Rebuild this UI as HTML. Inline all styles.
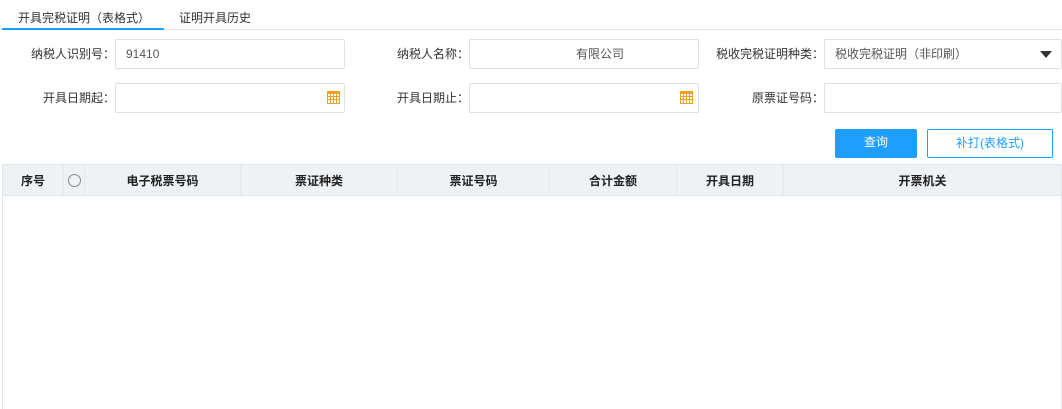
<!DOCTYPE html>
<html><head><meta charset="utf-8"><style>
*{box-sizing:border-box;margin:0;padding:0}
body{width:1062px;height:409px;background:#fff;font-family:"Liberation Sans","Noto Sans CJK SC",sans-serif;font-size:12px;color:#333;position:relative;overflow:hidden}
.a{position:absolute}
.tabs{left:0;top:0;width:1062px;height:30px;border-bottom:1px solid #e4e4e4}
.tab{top:9px;font-size:12px;color:#333}
.ul{left:2px;top:28px;width:162px;height:2px;background:#1e9fff}
.lbl{text-align:right;font-size:12px;color:#333;line-height:30px;height:30px}
.in{height:30px;border:1px solid #e0e0e0;border-radius:2px;line-height:28px;padding-left:10px;font-size:12px;color:#555}
.cal{width:13px;height:13px;border:1.5px solid #f0a020;border-top-width:3px;background:repeating-linear-gradient(90deg,transparent 0 2px,#f0a020 2px 3px),#fff;background:
linear-gradient(90deg,transparent 2px,#f0a020 2px 3px,transparent 3px 5px,#f0a020 5px 6px,transparent 6px 8px,#f0a020 8px 9px,transparent 9px),
linear-gradient(180deg,transparent 2px,#f0a020 2px 3px,transparent 3px 5px,#f0a020 5px 6px,transparent 6px);}
.btn{height:29px;line-height:27px;text-align:center;border-radius:2px;font-size:12px}
table{position:absolute;left:2px;top:164px;width:1060px;border-collapse:collapse}
th{background:#eff2f5;border:1px solid #e3e6ea;font-weight:bold;font-size:12px;color:#222;height:31px;padding:0}
</style></head><body>
<div class="a tabs"></div>
<div class="a tab" style="left:18px">开具完税证明（表格式）</div>
<div class="a tab" style="left:179px">证明开具历史</div>
<div class="a ul"></div>

<div class="a lbl" style="left:0;width:115px;top:39px">纳税人识别号：</div>
<div class="a in" style="left:115px;top:39px;width:230px">91410</div>
<div class="a lbl" style="left:360px;width:109px;top:39px">纳税人名称：</div>
<div class="a in" style="left:469px;top:39px;width:230px;padding-left:106px">有限公司</div>
<div class="a lbl" style="left:700px;width:124px;top:39px">税收完税证明种类：</div>
<div class="a in" style="left:824px;top:39px;width:238px">税收完税证明（非印刷）</div>
<div class="a" style="left:1040px;top:51px;width:0;height:0;border-left:6px solid transparent;border-right:6px solid transparent;border-top:7px solid #333"></div>

<div class="a lbl" style="left:0;width:115px;top:83px">开具日期起：</div>
<div class="a in" style="left:115px;top:83px;width:230px"></div>
<div class="a cal" style="left:327px;top:91px"></div>
<div class="a lbl" style="left:360px;width:109px;top:83px">开具日期止：</div>
<div class="a in" style="left:469px;top:83px;width:230px"></div>
<div class="a cal" style="left:680px;top:91px"></div>
<div class="a lbl" style="left:700px;width:124px;top:83px">原票证号码：</div>
<div class="a in" style="left:824px;top:83px;width:238px"></div>

<div class="a btn" style="left:835px;top:129px;width:82px;background:#1e9fff;color:#fff">查询</div>
<div class="a btn" style="left:927px;top:129px;width:126px;border:1px solid #1e9fff;color:#1e9fff">补打(表格式)</div>

<table><tr>
<th style="width:61px">序号</th>
<th style="width:21px"><span style="display:inline-block;width:13px;height:13px;border:1px solid #888;border-radius:50%;vertical-align:middle"></span></th>
<th style="width:156px">电子税票号码</th>
<th style="width:157px">票证种类</th>
<th style="width:152px">票证号码</th>
<th style="width:127px">合计金额</th>
<th style="width:107px">开具日期</th>
<th>开票机关</th>
</tr></table>
<div class="a" style="left:2px;top:195px;width:1px;height:214px;background:#e3e6ea"></div>
<div class="a" style="left:1061px;top:195px;width:1px;height:214px;background:#e3e6ea"></div>
</body></html>
